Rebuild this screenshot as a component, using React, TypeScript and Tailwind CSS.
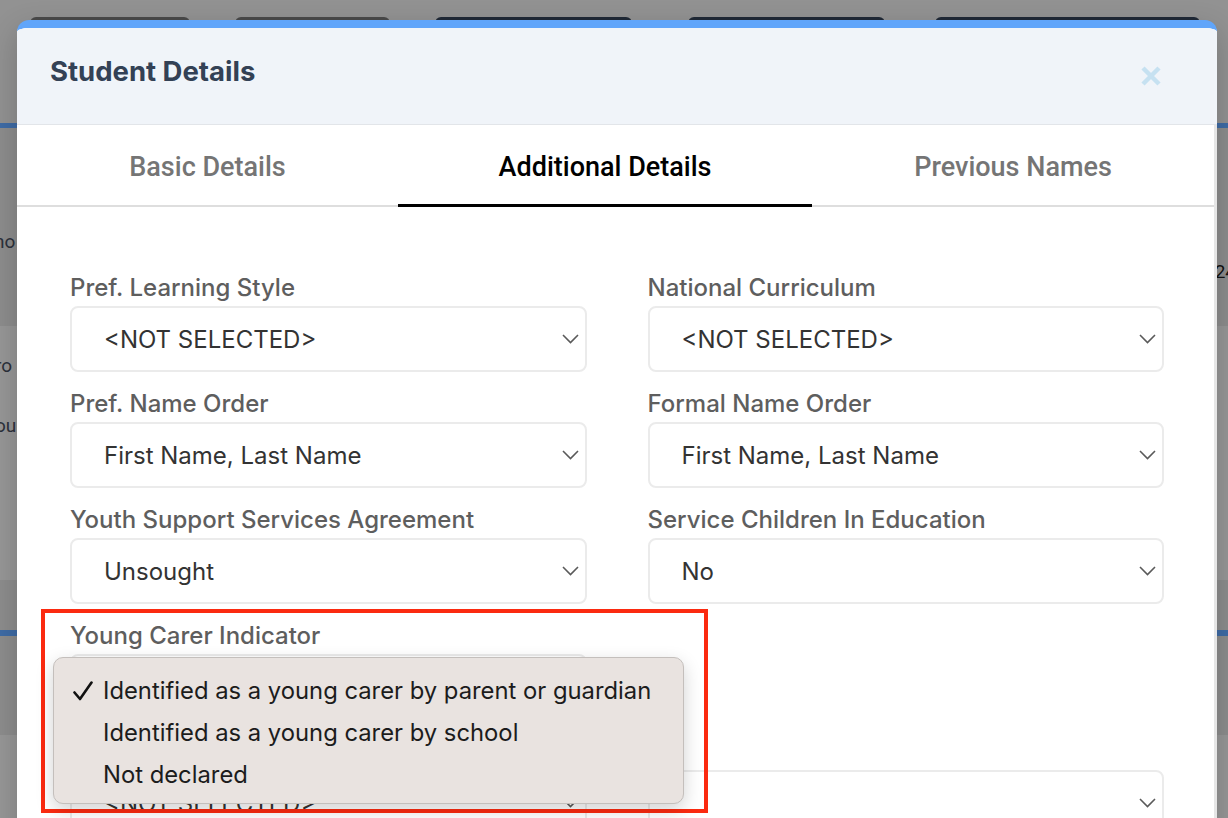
import { Fragment } from "react";

type Field = {
  label: string;
  value: string;
  open?: boolean;
};

const rows: (Field | null)[][] = [
  [
    { label: "Pref. Learning Style", value: "<NOT SELECTED>" },
    { label: "National Curriculum", value: "<NOT SELECTED>" },
  ],
  [
    { label: "Pref. Name Order", value: "First Name, Last Name" },
    { label: "Formal Name Order", value: "First Name, Last Name" },
  ],
  [
    { label: "Youth Support Services Agreement", value: "Unsought" },
    { label: "Service Children In Education", value: "No" },
  ],
  [{ label: "Young Carer Indicator", value: "", open: true }, null],
  [
    { label: "Young Carer Status", value: "<NOT SELECTED>" },
    { label: "", value: "" },
  ],
];

const carerOptions = [
  "Identified as a young carer by parent or guardian",
  "Identified as a young carer by school",
  "Not declared",
];

function Chevron() {
  return (
    <svg width="17" height="10" viewBox="0 0 17 10" fill="none">
      <polyline points="1,1 8.5,8.5 16,1" stroke="#5a5a5a" strokeWidth="1.6" />
    </svg>
  );
}

function Check() {
  return (
    <svg width="20" height="20" viewBox="0 0 20 20" fill="none">
      <path d="M1.5 11.5 L7 18 L18.5 1.5" stroke="#111" strokeWidth="2.6" strokeLinecap="round" strokeLinejoin="round" />
    </svg>
  );
}

function OptionMenu() {
  return (
    <div className="absolute left-[-17px] top-[37px] z-10 h-[147px] w-[631px] rounded-[10px] border border-[#c4bfbc] bg-[#e9e3e0] pt-[12px] shadow-[0_6px_18px_rgba(0,0,0,0.18)]">
      {carerOptions.map((opt, i) => (
        <div key={opt} className="flex h-[42px] items-center text-[23.8px] text-[#1c1c1c]">
          <span className="flex w-[49px] justify-end pr-[10px]">{i === 0 && <Check />}</span>
          <span>{opt}</span>
        </div>
      ))}
    </div>
  );
}

function SelectField({ field }: { field: Field }) {
  return (
    <div className="relative">
      <div className="h-[32px] text-[24px] leading-[32px] font-medium text-[#5e5e5e]">{field.label}</div>
      <div className="mt-[2px] flex h-[66px] items-center justify-between rounded-[8px] border-2 border-[#ebebeb] bg-white pl-[32px] pr-[6px] text-[24px] text-[#333]">
        <span className="pt-[2px]">{field.value}</span>
        <Chevron />
      </div>
      {field.open && <OptionMenu />}
    </div>
  );
}

function Backdrop() {
  return (
    <div className="flex h-full flex-col font-['Roboto',sans-serif]">
      <div className="h-[17px]" />
      <div className="flex h-[30px]">
        <div className="ml-[30px] w-[160px] rounded-md bg-[#4a4a4a]" />
        <div className="ml-[45px] w-[155px] rounded-md bg-[#4a4a4a]" />
        <div className="ml-[45px] w-[197px] rounded-md bg-[#202937]" />
        <div className="ml-[56px] w-[197px] rounded-md bg-[#202937]" />
        <div className="ml-[50px] w-[265px] rounded-md bg-[#202937]" />
      </div>
      <div className="h-[76px]" />
      <div className="h-[5px] bg-[#3f6ca6]" />
      <div className="relative h-[198px] bg-[#8d8d8d] text-[19px] text-[#2c313b]">
        <span className="absolute left-[-6px] top-[100px]">no</span>
        <span className="absolute right-[-8px] top-[130px] text-[#111]">24</span>
      </div>
      <div className="relative h-[254px] bg-[#979797] text-[19px] text-[#2c313b]">
        <span className="absolute left-[-5px] top-[26px]">ro</span>
        <span className="absolute left-[-5px] top-[86px]">ou</span>
      </div>
      <div className="h-[50px] bg-[#8d8d8d]" />
      <div className="h-[6px] bg-[#3f6ca6]" />
      <div className="h-[99px] bg-[#8d8d8d]" />
      <div className="flex-1 bg-[#979797]" />
    </div>
  );
}

export default function App() {
  return (
    <div className="relative h-[818px] w-full overflow-hidden bg-[#929292] font-['Inter',sans-serif]">
      <Backdrop />

      <div className="absolute left-[17px] top-[20px] w-[1200px] overflow-hidden rounded-t-[12px] border-t-8 border-[#60a5fa] bg-white shadow-[0_10px_30px_rgba(0,0,0,0.2)]">
        <div className="flex h-[97px] items-center justify-between border-b border-[#e2e5e9] bg-[#f0f4f9] pl-[33px] pr-[55px]">
          <h2 className="mb-[9px] text-[27.5px] font-bold text-[#334155]">Student Details</h2>
          <svg width="22" height="22" viewBox="0 0 22 22">
            <path d="M3 3 L19 19 M19 3 L3 19" stroke="#c6e1f1" strokeWidth="4.5" />
          </svg>
        </div>

        <div className="border-r-[3px] border-[#e6e6e6] pb-[40px]">
          <div className="flex h-[82px] font-['Roboto',sans-serif] text-[27px] font-medium">
            <div className="flex w-[381px] items-center justify-center border-b-2 border-[#dedede] pt-[5px] text-[#757575]">
              Basic Details
            </div>
            <div className="flex w-[414px] items-center justify-center border-b-[3px] border-[#000] pt-[5px] text-[#000]">
              Additional Details
            </div>
            <div className="flex flex-1 items-center justify-center border-b-2 border-[#dedede] pt-[5px] text-[#757575]">
              Previous Names
            </div>
          </div>

          <div className="grid grid-cols-2 gap-x-[61px] gap-y-[16px] pl-[53px] pr-[50px] pt-[65px]">
            {rows.map((row, r) => (
              <Fragment key={r}>
                {row.map((field, c) =>
                  field ? <SelectField key={c} field={field} /> : <div key={c} />,
                )}
              </Fragment>
            ))}
          </div>
        </div>
      </div>

      <div className="absolute left-[41px] top-[609px] h-[204px] w-[667px] border-4 border-[#fb2a10]" />
    </div>
  );
}
